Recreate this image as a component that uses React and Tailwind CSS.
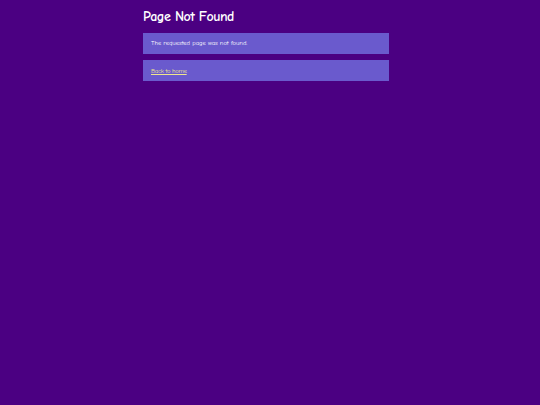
export default function App() {
  return (
    <div
      className="min-h-[405px] w-full bg-[#4b0082] text-white"
      style={{ fontFamily: '"Comic Sans MS", "Comic Neue", cursive, sans-serif' }}
    >
      <div className="ml-[143px] w-[246px] pt-[7px]">
        <h1 className="text-[14px] tracking-[-0.5px] font-bold leading-[20px] m-0">Page Not Found</h1>
        <div className="mt-[6px] h-[21px] bg-[#6a5acd] px-[8px] flex items-center text-[6.5px]">
          The requested page was not found.
        </div>
        <div className="mt-[6px] h-[21px] bg-[#6a5acd] px-[8px] pt-[2px] flex items-center text-[6.5px] tracking-[-0.25px]">
          <a href="#" className="text-[#f0e68c] underline">Back to home</a>
        </div>
      </div>
    </div>
  );
}
